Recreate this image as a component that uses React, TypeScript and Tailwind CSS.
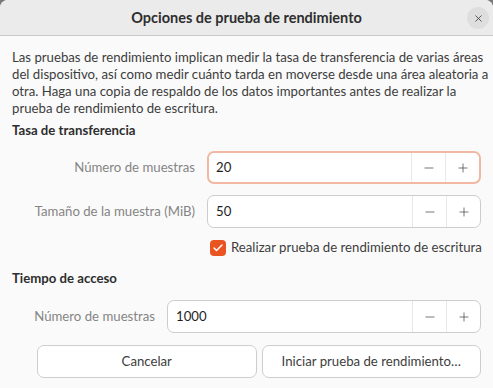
import { Check, Minus, Plus, X } from 'lucide-react'

// Campo numérico con botones − / +
function Spin({ value, focused }: { value: string; focused?: boolean }) {
  return (
    <div
      className={
        'flex h-[33px] flex-1 items-stretch rounded-[7px] bg-white ' +
        (focused ? 'border-2 border-[#f2b8a3]' : 'border border-[#cdcdcd]')
      }
    >
      <div className={'flex flex-1 items-center text-[#1e1e1e] ' + (focused ? 'pl-[7px]' : 'pl-[8px]')}>{value}</div>
      <div className="flex w-[34px] items-center justify-center border-l border-[#e8e8e8] text-[#3d3d3d]">
        <Minus size={14} strokeWidth={1.2} />
      </div>
      <div className="flex w-[34px] items-center justify-center border-l border-[#e8e8e8] text-[#3d3d3d]">
        <Plus size={14} strokeWidth={1.2} />
      </div>
    </div>
  )
}

export default function App() {
  return (
    <div className="h-[388px] w-[493px] overflow-hidden bg-[#7a7a7a] font-['Lato',sans-serif] text-[13.2px] leading-[17px] text-[#3d3d3d]">
      <div className="h-full rounded-t-[8px] bg-[#fafafa]">
        {/* barra de título */}
        <div className="relative flex h-[36px] items-center justify-center rounded-t-[8px] border-b border-[#c9c9c9] bg-[#ebebeb]">
          <span className="text-[14.5px] font-bold text-[#2e2e2e]">Opciones de prueba de rendimiento</span>
          <div className="absolute right-[4px] top-[7px] flex h-[22px] w-[22px] items-center justify-center rounded-full bg-[#dedede] text-[#3d3d3d]">
            <X size={11} strokeWidth={1.8} />
          </div>
        </div>

        <div className="px-[12px] pt-[13px]">
          <p className="whitespace-nowrap">
            Las pruebas de rendimiento implican medir la tasa de transferencia de varias áreas
            <br />
            del dispositivo, así como medir cuánto tarda en moverse desde una área aleatoria a
            <br />
            otra. Haga una copia de respaldo de los datos importantes antes de realizar la
            <br />
            prueba de rendimiento de escritura.
          </p>

          <div className="mt-[5px] font-bold text-[#2e2e2e]">Tasa de transferencia</div>

          <div className="mt-[12px] flex items-center">
            <div className="w-[195px] pr-[12px] text-right text-[#858585]">Número de muestras</div>
            <Spin value="20" focused />
          </div>
          <div className="mt-[11px] flex items-center">
            <div className="w-[195px] pr-[12px] text-right text-[#858585]">Tamaño de la muestra (MiB)</div>
            <Spin value="50" />
          </div>

          <div className="mt-[11px] flex items-center pl-[198px]">
            <div className="flex h-[16px] w-[16px] shrink-0 items-center justify-center rounded-[4px] bg-[#e95420] text-white">
              <Check size={12} strokeWidth={3} />
            </div>
            <span className="ml-[5px] whitespace-nowrap">Realizar prueba de rendimiento de escritura</span>
          </div>

          <div className="mt-[14px] font-bold text-[#2e2e2e]">Tiempo de acceso</div>

          <div className="mt-[13px] flex items-center">
            <div className="w-[155px] pr-[12px] text-right text-[#858585]">Número de muestras</div>
            <Spin value="1000" />
          </div>

          <div className="mt-[12px] flex gap-[5px] pl-[25px]">
            <button className="h-[33px] flex-1 rounded-[7px] border border-[#cdcdcd] bg-white">Cancelar</button>
            <button className="h-[33px] flex-1 rounded-[7px] border border-[#cdcdcd] bg-white">
              Iniciar prueba de rendimiento…
            </button>
          </div>
        </div>
      </div>
    </div>
  )
}
